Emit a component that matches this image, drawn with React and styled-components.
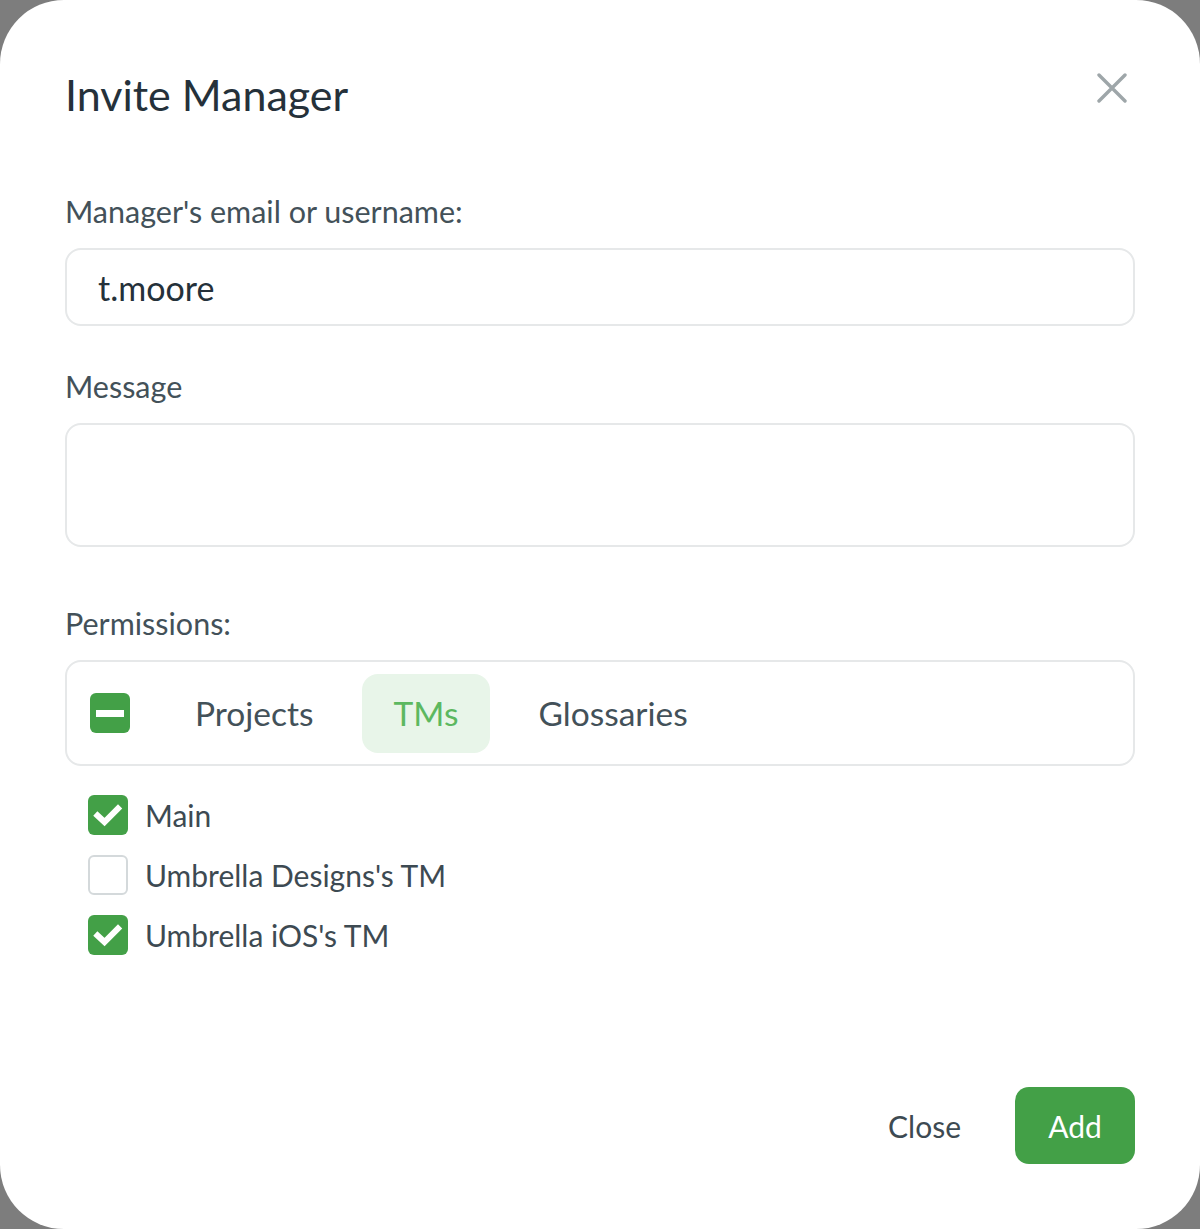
import React, { useState } from 'react';
import styled, { createGlobalStyle } from 'styled-components';

const GlobalStyle = createGlobalStyle`
  html, body, #root {
    height: 100%;
  }
  body {
    margin: 0;
    background: #7d7d7d;
    font-family: Lato, "Open Sans", sans-serif;
    -webkit-font-smoothing: antialiased;
  }
  * { box-sizing: border-box; }
`;

const permissionsTabs = ['Projects', 'TMs', 'Glossaries'];

const initialTms = [
  { name: 'Main', checked: true },
  { name: "Umbrella Designs's TM", checked: false },
  { name: "Umbrella iOS's TM", checked: true },
];

const CheckIcon = () => (
  <svg width="40" height="40" viewBox="0 0 40 40" fill="none">
    <polyline points="9.5,20.5 16.5,27 30,13.5" stroke="#fff" strokeWidth="6" strokeLinecap="square" strokeLinejoin="miter" />
  </svg>
);

const CloseIcon = () => (
  <svg width="30" height="30" viewBox="0 0 30 30">
    <path d="M2 2 L28 28 M28 2 L2 28" stroke="#9ea6a9" strokeWidth="3.4" strokeLinecap="round" />
  </svg>
);

const App = () => {
  const [email, setEmail] = useState('t.moore');
  const [message, setMessage] = useState('');
  const [activeTab, setActiveTab] = useState('TMs');
  const [tms, setTms] = useState(initialTms);

  const toggle = (i) => {
    setTms(tms.map((tm, idx) => (idx === i ? { ...tm, checked: !tm.checked } : tm)));
  };

  return (
    <>
      <GlobalStyle />
      <Dialog>
        <Header>
          <Title>Invite Manager</Title>
          <CloseButton aria-label="Close">
            <CloseIcon />
          </CloseButton>
        </Header>

        <Label>Manager's email or username:</Label>
        <Input value={email} onChange={(e) => setEmail(e.target.value)} />

        <Label $spaced>Message</Label>
        <TextArea value={message} onChange={(e) => setMessage(e.target.value)} />

        <Label $spaced $wide>Permissions:</Label>
        <TabsBox>
          <MinusBox>
            <MinusBar />
          </MinusBox>
          <Tabs>
            {permissionsTabs.map((tab) => (
              <Tab key={tab} $active={tab === activeTab} onClick={() => setActiveTab(tab)}>
                {tab}
              </Tab>
            ))}
          </Tabs>
        </TabsBox>

        <CheckList>
          {tms.map((tm, i) => (
            <CheckRow key={tm.name} onClick={() => toggle(i)}>
              <CheckBox $checked={tm.checked}>{tm.checked && <CheckIcon />}</CheckBox>
              <CheckLabel>{tm.name}</CheckLabel>
            </CheckRow>
          ))}
        </CheckList>

        <Footer>
          <TextButton>Close</TextButton>
          <PrimaryButton>Add</PrimaryButton>
        </Footer>
      </Dialog>
    </>
  );
};

const Dialog = styled.div`
  min-height: 100%;
  background: #fff;
  border-radius: 64px;
  padding: 67px 65px 65px 65px;
  display: flex;
  flex-direction: column;
`;

const Header = styled.div`
  display: flex;
  justify-content: space-between;
  align-items: flex-start;
  margin-bottom: 70px;
`;

const Title = styled.h1`
  margin: 0;
  font-size: 43px;
  line-height: 56px;
  font-weight: 400;
  color: #25313a;
`;

const CloseButton = styled.button`
  width: 44px;
  height: 44px;
  margin-top: -1px;
  margin-right: 1px;
  padding: 0;
  border: none;
  background: transparent;
  display: flex;
  align-items: center;
  justify-content: center;
  cursor: pointer;
`;

const Label = styled.div`
  font-size: 30.5px;
  line-height: 36px;
  color: #435159;
  margin-top: ${(p) => (p.$wide ? '58px' : p.$spaced ? '42px' : '0')};
  margin-bottom: 19px;
`;

const fieldStyles = `
  width: 100%;
  border: 2px solid #e6e8e9;
  border-radius: 16px;
  background: #fff;
  font-family: Lato, "Open Sans", sans-serif;
  font-size: 34px;
  color: #25313a;
  outline: none;
`;

const Input = styled.input`
  ${fieldStyles}
  height: 78px;
  padding: 0 31px;
`;

const TextArea = styled.textarea`
  ${fieldStyles}
  height: 124px;
  padding: 20px 31px;
  resize: none;
  display: block;
`;

const TabsBox = styled.div`
  height: 106px;
  border: 2px solid #e6e8e9;
  border-radius: 16px;
  padding: 0 0 0 23px;
  display: flex;
  align-items: center;
`;

const MinusBox = styled.div`
  width: 40px;
  height: 40px;
  border-radius: 6px;
  background: #43a047;
  display: flex;
  align-items: center;
  justify-content: center;
  margin-right: 33px;
`;

const MinusBar = styled.div`
  width: 28px;
  height: 7px;
  background: #fff;
`;

const Tabs = styled.div`
  display: flex;
  gap: 16px;
`;

const Tab = styled.div`
  height: 79px;
  padding: 0 32px 0 32px;
  border-radius: 16px;
  display: flex;
  align-items: center;
  font-size: 33.5px;
  color: ${(p) => (p.$active ? '#5cb860' : '#435159')};
  background: ${(p) => (p.$active ? '#e8f5e9' : 'transparent')};
  cursor: pointer;
`;

const CheckList = styled.div`
  display: flex;
  flex-direction: column;
  gap: 20px;
  margin-top: 29px;
  padding-left: 23px;
`;

const CheckRow = styled.label`
  display: flex;
  align-items: center;
  height: 40px;
  cursor: pointer;
`;

const CheckBox = styled.div`
  width: 40px;
  height: 40px;
  border-radius: 6px;
  background: ${(p) => (p.$checked ? '#43a047' : '#fff')};
  border: ${(p) => (p.$checked ? 'none' : '2px solid #d4d9db')};
  display: flex;
  align-items: center;
  justify-content: center;
  margin-right: 17px;
`;

const CheckLabel = styled.span`
  font-size: 30px;
  color: #3d4a52;
`;

const Footer = styled.div`
  margin-top: auto;
  display: flex;
  justify-content: flex-end;
  align-items: center;
  gap: 26px;
`;

const TextButton = styled.button`
  border: none;
  background: transparent;
  font-family: Lato, "Open Sans", sans-serif;
  font-size: 30px;
  color: #3d4a52;
  padding: 0 28px;
  height: 77px;
  cursor: pointer;
`;

const PrimaryButton = styled.button`
  border: none;
  background: #43a047;
  color: #fff;
  font-family: Lato, "Open Sans", sans-serif;
  font-size: 30px;
  width: 120px;
  height: 77px;
  border-radius: 14px;
  cursor: pointer;
`;

export default App;
